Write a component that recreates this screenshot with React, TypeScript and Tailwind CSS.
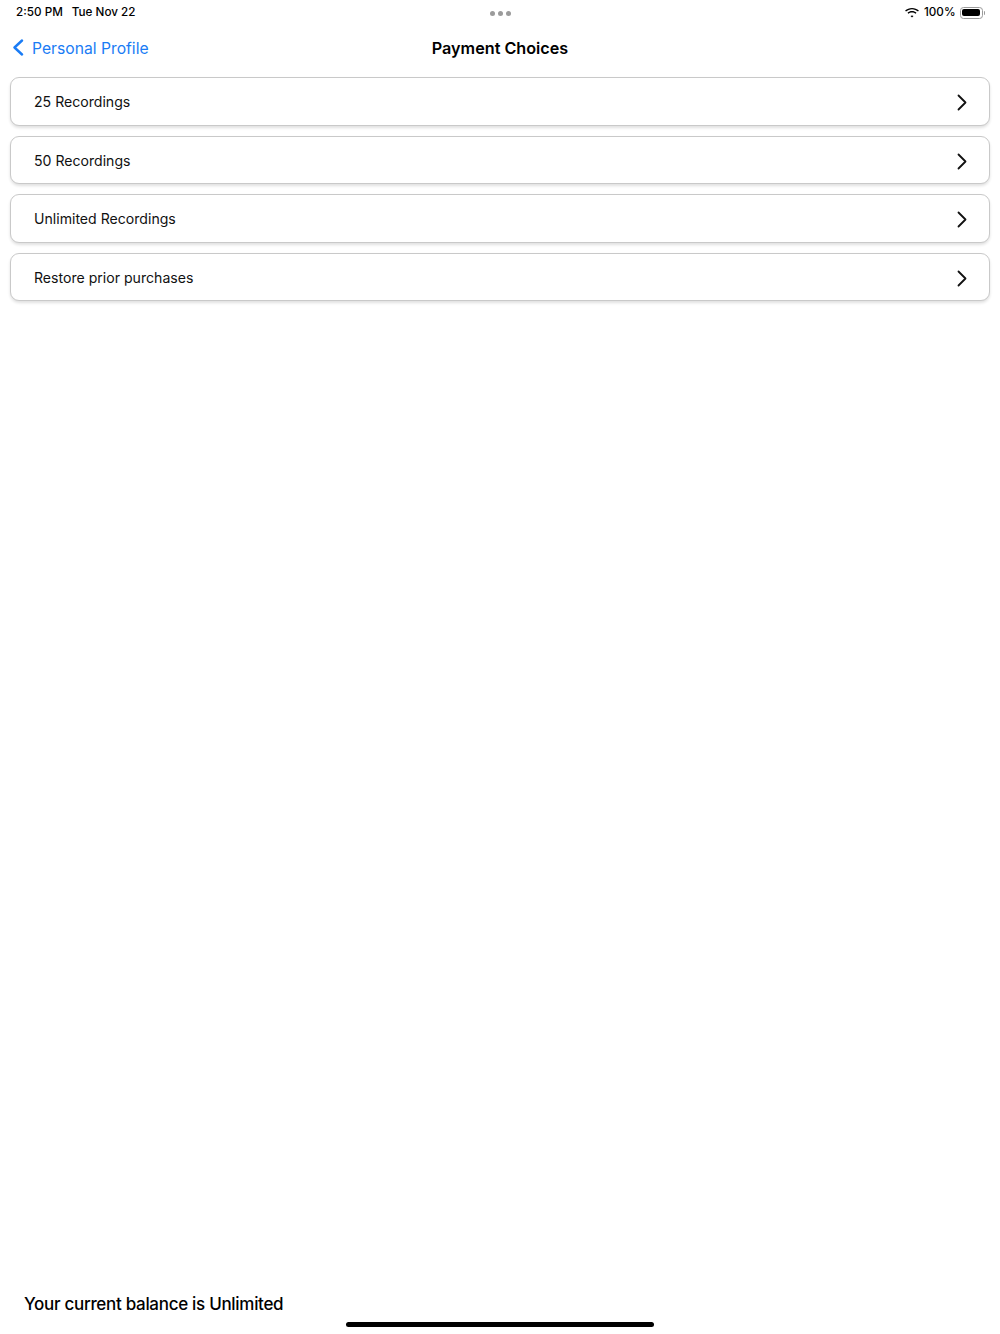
import React from "react";

const rows = ["25 Recordings", "50 Recordings", "Unlimited Recordings", "Restore prior purchases"];

const WifiIcon = () => (
    <svg width="14" height="10" viewBox="0 0 14 10" fill="#000">
        <path d="M7 1.2c2.3 0 4.4.9 6 2.4l.9-1C12.1.9 9.7 0 7 0S1.9.9.1 2.6l.9 1C2.6 2.1 4.7 1.2 7 1.2z" />
        <path d="M7 4.4c1.4 0 2.6.5 3.6 1.4l.9-1C10.3 3.7 8.7 3.1 7 3.1S3.7 3.7 2.5 4.8l.9 1C4.4 4.9 5.6 4.4 7 4.4z" />
        <path d="M7 7.4c.6 0 1.1.2 1.5.6L7 9.6 5.5 8c.4-.4.9-.6 1.5-.6z" />
    </svg>
);

const Battery = () => (
    <div className="flex items-center">
        <div className="flex h-[12px] w-[23px] items-center rounded-[3.5px] border border-[#9a9a9a] p-[1.5px]">
            <div className="h-full w-full rounded-[2px] bg-black" />
        </div>
        <div className="ml-[1px] h-[4px] w-[1.5px] rounded-r-sm bg-[#9a9a9a]" />
    </div>
);

const BackChevron = () => (
    <svg width="12" height="17" viewBox="0 0 12 17" fill="none">
        <polyline points="10,1.5 2.5,8.5 10,15.5" stroke="#1a7cf5" strokeWidth="2.4" strokeLinecap="round" strokeLinejoin="round" />
    </svg>
);

const RowChevron = () => (
    <svg width="10" height="17" viewBox="0 0 10 17" fill="none">
        <polyline points="1.5,1.5 8.5,8.5 1.5,15.5" stroke="#111" strokeWidth="1.8" strokeLinecap="round" strokeLinejoin="round" />
    </svg>
);

const App = (): React.JSX.Element => {
    return (
        <div
            className="relative flex h-[1334px] w-[1000px] flex-col overflow-hidden bg-white text-black"
            style={{ fontFamily: "Inter, 'Liberation Sans', sans-serif" }}
        >
            {/* Status bar */}
            <div className="flex h-[24px] items-center justify-between pl-[16px] pr-[15px] pt-[2px] text-[11.7px] font-medium">
                <div className="flex w-[200px] gap-[9px]">
                    <span>2:50 PM</span>
                    <span>Tue Nov 22</span>
                </div>
                <div className="flex gap-[3px]">
                    <span className="h-[5px] w-[5px] rounded-full bg-[#9b9b9b]" />
                    <span className="h-[5px] w-[5px] rounded-full bg-[#9b9b9b]" />
                    <span className="h-[5px] w-[5px] rounded-full bg-[#9b9b9b]" />
                </div>
                <div className="flex w-[200px] items-center justify-end gap-[4px]">
                    <WifiIcon />
                    <span className="ml-[1px]">100%</span>
                    <Battery />
                </div>
            </div>

            {/* Nav bar */}
            <div className="relative flex h-[48px] items-center">
                <button type="button" className="flex items-center pl-[12px] text-[#1a7cf5]">
                    <BackChevron />
                    <span className="ml-[8px] pt-[2px] text-[15.7px]">Personal Profile</span>
                </button>
                <div className="absolute left-1/2 -translate-x-1/2 text-[16.2px] font-semibold">Payment Choices</div>
            </div>

            {/* List */}
            <div className="mt-[5px] flex flex-col gap-[10px] px-[10px]">
                {rows.map((label) => (
                    <div
                        key={label}
                        className="flex h-[48.5px] items-center justify-between rounded-[9px] border border-[#c9c9c9] bg-white pl-[23px] pr-[22px] shadow-[0_2px_3px_rgba(0,0,0,0.12)]"
                    >
                        <span className="pt-[1px] text-[14.1px] text-[#111]">{label}</span>
                        <span className="pt-[3px]">
                            <RowChevron />
                        </span>
                    </div>
                ))}
            </div>

            <div className="flex-1" />

            {/* Footer */}
            <div className="pl-[24px] text-[17px] font-medium tracking-[-0.3px]">Your current balance is Unlimited</div>
            <div className="flex justify-center pb-[7px] pt-[5px]">
                <div className="h-[5px] w-[308px] rounded-full bg-black" />
            </div>
        </div>
    );
};

export default App;
